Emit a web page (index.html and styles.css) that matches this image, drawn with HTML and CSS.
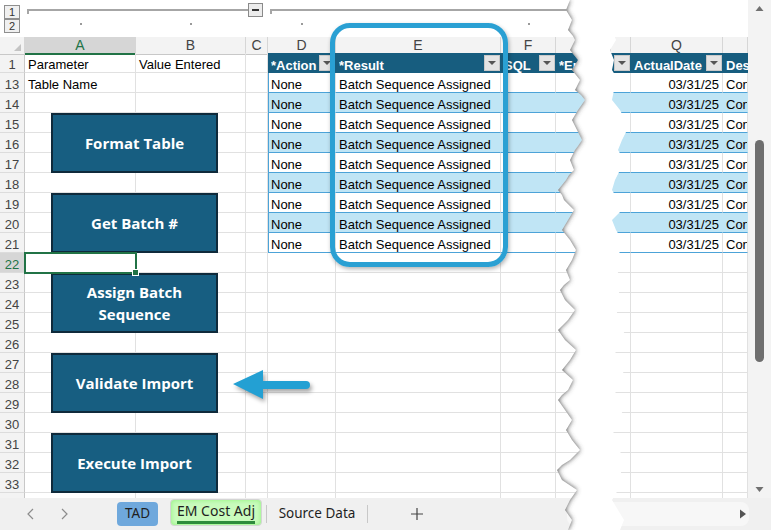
FILE: index.html
```html
<!DOCTYPE html>
<html lang="en">
<head>
    <meta charset="UTF-8">
    <meta name="viewport" content="width=device-width, initial-scale=1.0">
    <title>EM Cost Adj</title>
    <link rel="stylesheet" href="styles.css">
</head>
<body>
    <div class="app">
        <div class="main">
            <div class="sheet">
                <div class="outline">
                    <div class="levels"><span class="lvl">1</span><span class="lvl">2</span></div>
                    <div class="group g1"><span class="bar"></span><span class="minus"></span></div>
                    <div class="group g2"><span class="bar"></span></div>
                    <div class="dot c-a"></div>
                    <div class="dot c-b"></div>
                    <div class="dot c-d"></div>
                    <div class="dot c-f"></div>
                </div>
                <div class="grid" id="grid">
                    <div class="row colhead">
                        <div class="ch corner"></div>
                        <div class="ch on">A</div>
                        <div class="ch">B</div>
                        <div class="ch">C</div>
                        <div class="ch">D</div>
                        <div class="ch">E</div>
                        <div class="ch">F</div>
                        <div class="ch">G</div>
                        <div class="ch"></div>
                        <div class="ch">Q</div>
                        <div class="ch"></div>
                    </div>
                    <div class="row">
                        <div class="c rh">1</div>
                        <div class="c">Parameter</div>
                        <div class="c">Value Entered</div>
                        <div class="c"></div>
                        <div class="hd"><span class="lbl">*Action</span><span class="fb"></span></div>
                        <div class="hd"><span class="lbl">*Result</span><span class="fb"></span></div>
                        <div class="hd"><span class="lbl">SQL</span><span class="fb"></span></div>
                        <div class="hd"><span class="lbl">*Error</span><span class="fb"></span></div>
                        <div class="hd"><span class="lbl"></span><span class="fb"></span></div>
                        <div class="hd"><span class="lbl">ActualDate</span><span class="fb"></span></div>
                        <div class="hd"><span class="lbl">Des</span></div>
                    </div>
                </div>
            </div>
            <div class="vscroll">
                <svg class="arr" width="9" height="18" viewBox="0 0 9 18"><path d="M0.5 11 L4.5 6 L8.5 11 Z" fill="#707070"/></svg>
                <div class="thumb"></div>
                <svg class="arr down" width="9" height="18" viewBox="0 0 9 18"><path d="M0.5 7 L4.5 12 L8.5 7 Z" fill="#707070"/></svg>
            </div>
        </div>

        <div class="tabbar">
            <svg class="nav" width="14" height="14" viewBox="0 0 14 14"><polyline points="9,2 4,7 9,12" fill="none" stroke="#8c8c8c" stroke-width="1.2"/></svg>
            <svg class="nav next" width="14" height="14" viewBox="0 0 14 14"><polyline points="5,2 10,7 5,12" fill="none" stroke="#8c8c8c" stroke-width="1.2"/></svg>
            <div class="tab tad">TAD</div>
            <div class="tab active"><span>EM Cost Adj</span></div>
            <span class="sep"></span>
            <div class="tab plain">Source Data</div>
            <span class="sep last"></span>
            <svg class="add" width="20" height="14" viewBox="0 0 20 14"><path d="M10 1 V13 M4 7 H16" stroke="#444" stroke-width="1.2"/></svg>
            <div class="hscroll">
                <svg width="8" height="12" viewBox="0 0 8 12"><path d="M1 1.5 L7 6 L1 10.5 Z" fill="#555"/></svg>
            </div>
        </div>

        <!-- macro buttons floating over the sheet -->
        <div class="macros">
            <div class="macro">Format Table</div>
            <div class="macro">Get Batch #</div>
            <div class="macro">Assign Batch<br>Sequence</div>
            <div class="macro">Validate Import</div>
            <div class="macro">Execute Import</div>
        </div>

        <div class="focus-ring"></div>

        <svg class="pointer" width="95" height="45" viewBox="0 0 95 45">
            <path d="M8 22 L38 8 L38 19 L81 19 A4 4 0 0 1 81 27 L38 27 L38 37 Z" fill="#23a0d3"/>
        </svg>

        <!-- torn gap between the two halves of the sheet -->
        <svg class="tear" width="100" height="530" viewBox="0 0 100 530">
            <defs>
                <clipPath id="gap">
                    <path d="M30 0 L26 10 L29 15 L32 20 L28 30 L33 36 L35 40 L30 50 L34 55 L38 60 L32 70 L36 75 L40 80 L35 90 L41 95 L45 100 L38 110 L35 115 L32 120 L37 130 L42 140 L38 146 L35 150 L30 160 L34 170 L29 175 L26 180 L18 190 L22 195 L24 200 L34 210 L28 220 L25 225 L22 230 L30 240 L36 250 L32 260 L26 270 L30 280 L24 285 L20 290 L25 300 L35 310 L28 320 L22 326 L18 330 L25 340 L36 350 L30 360 L22 370 L33 380 L28 390 L22 395 L18 400 L25 410 L32 420 L26 430 L32 440 L40 450 L30 460 L22 465 L17 470 L22 480 L37 490 L30 500 L25 510 L32 520 L28 530 L80 530 L84 520 L78 510 L72 500 L78 490 L84 480 L80 470 L76 460 L82 450 L78 440 L72 430 L76 420 L84 410 L80 400 L74 390 L78 380 L85 370 L80 360 L74 350 L78 340 L86 330 L80 320 L76 310 L82 300 L78 290 L72 280 L80 270 L84 260 L78 250 L82 240 L76 230 L72 220 L82 210 L78 200 L72 190 L75 180 L80 170 L84 160 L78 150 L82 140 L87 130 L85 120 L80 110 L72 100 L74 90 L78 80 L72 70 L74 60 L70 50 L76 40 L72 30 L80 20 L74 10 L78 0 Z"/>
                </clipPath>
                <filter id="soft" x="-50%" y="-5%" width="200%" height="110%">
                    <feGaussianBlur stdDeviation="2.5"/>
                </filter>
            </defs>
            <rect x="0" y="0" width="100" height="530" fill="#fff" clip-path="url(#gap)"/>
            <g clip-path="url(#gap)">
                <path filter="url(#soft)" fill="#4a4a4a" d="M-20 0 L30 0 L26 10 L29 15 L32 20 L28 30 L33 36 L35 40 L30 50 L34 55 L38 60 L32 70 L36 75 L40 80 L35 90 L41 95 L45 100 L38 110 L35 115 L32 120 L37 130 L42 140 L38 146 L35 150 L30 160 L34 170 L29 175 L26 180 L18 190 L22 195 L24 200 L34 210 L28 220 L25 225 L22 230 L30 240 L36 250 L32 260 L26 270 L30 280 L24 285 L20 290 L25 300 L35 310 L28 320 L22 326 L18 330 L25 340 L36 350 L30 360 L22 370 L33 380 L28 390 L22 395 L18 400 L25 410 L32 420 L26 430 L32 440 L40 450 L30 460 L22 465 L17 470 L22 480 L37 490 L30 500 L25 510 L32 520 L28 530 L-20 530 Z"/>
            </g>
        </svg>
    </div>

    <script>
        // rows 13-34 of the sheet, the table ends at row 21
        const grid = document.getElementById('grid');
        const banded = [14, 16, 18, 20];

        for (let r = 13; r <= 34; r++) {
            const row = document.createElement('div');
            row.className = 'row';
            let html = '<div class="c rh' + (r === 22 ? ' on' : '') + '">' + r + '</div>';
            html += '<div class="c' + (r === 22 ? ' sel' : '') + '">' + (r === 13 ? 'Table Name' : '') + '</div>';
            html += '<div class="c"></div><div class="c"></div>';

            if (r <= 21) {
                const t = banded.includes(r) ? 'c t band' : 'c t';
                html += '<div class="' + t + ' first">None</div>';
                html += '<div class="' + t + '">Batch Sequence Assigned</div>';
                html += '<div class="' + t + '"></div>';
                html += '<div class="' + t + '"></div>';
                html += '<div class="' + t + '"></div>';
                html += '<div class="' + t + ' num">03/31/25</div>';
                html += '<div class="' + t + '">Con</div>';
            } else {
                for (let i = 0; i < 7; i++) html += '<div class="c"></div>';
            }
            row.innerHTML = html;
            grid.appendChild(row);
        }
    </script>
</body>
</html>
```

FILE: styles.css
```css
body {
    margin: 0;
    font-family: "Liberation Sans", Arial, sans-serif;
    font-size: 13px;
    color: #000;
    background-color: #fff;
}
.app {
    position: relative;
    width: 771px;
    height: 530px;
    overflow: hidden;
}
.main {
    display: flex;
    height: 498px;
}
.sheet {
    width: 748px;
    overflow: hidden;
}

/* outline / grouping strip */
.outline {
    display: grid;
    grid-template-columns: 25px 111px 110px 22px 68px 165px 55px 55px 20px 92px 25px;
    grid-template-rows: 18px 19px;
    height: 37px;
}
.levels {
    grid-column: 1;
    grid-row: 1 / 3;
    display: flex;
    flex-direction: column;
    padding: 5px 0 0 4px;
}
.lvl {
    width: 16px;
    height: 14px;
    box-sizing: border-box;
    border: 1px solid #8f8f8f;
    background-color: #f0f0f0;
    color: #333;
    font-size: 11px;
    line-height: 12px;
    text-align: center;
}
.group {
    grid-row: 1;
    display: flex;
    align-items: flex-start;
    padding-top: 3px;
}
.g1 {
    grid-column: 2 / 5;
    padding-left: 2px;
    padding-right: 5px;
}
.g2 {
    grid-column: 5 / 9;
    padding-left: 2px;
}
.bar {
    flex: 1;
    height: 3px;
    margin-top: 6px;
    border-top: 2px solid #a6a6a6;
    border-left: 2px solid #a6a6a6;
}
.minus {
    position: relative;
    width: 15px;
    height: 14px;
    box-sizing: border-box;
    border: 1px solid #8a8a8a;
    background-color: #ececec;
}
.minus::after {
    content: "";
    position: absolute;
    left: 3px;
    top: 5px;
    width: 7px;
    height: 2px;
    background-color: #333;
}
.dot {
    grid-row: 2;
    justify-self: center;
    width: 2px;
    height: 2px;
    margin-top: 5px;
    background-color: #9a9a9a;
}
.c-a { grid-column: 2; }
.c-b { grid-column: 3; }
.c-d { grid-column: 5; }
.c-f { grid-column: 7; }

/* sheet grid */
.row {
    display: grid;
    grid-template-columns: 25px 111px 110px 22px 68px 165px 55px 55px 20px 92px 25px;
    height: 20px;
}
.colhead {
    height: 16px;
}
.ch {
    box-sizing: border-box;
    background-color: #f3f3f3;
    border-right: 1px solid #d6d6d6;
    border-bottom: 1px solid #c8c8c8;
    color: #444;
    font-size: 14px;
    line-height: 16px;
    text-align: center;
}
.ch.on {
    background-color: #d6d6d6;
    color: #217346;
    border-bottom: 2px solid #217346;
}
.ch.corner {
    position: relative;
}
.ch.corner::after {
    content: "";
    position: absolute;
    right: 3px;
    bottom: 3px;
    border-left: 7px solid transparent;
    border-bottom: 7px solid #c4c4c4;
}
.c {
    box-sizing: border-box;
    border-right: 1px solid #e1e1e1;
    border-bottom: 1px solid #e1e1e1;
    padding: 0 3px;
    line-height: 23px;
    white-space: nowrap;
    overflow: hidden;
}
.rh {
    padding: 0;
    background-color: #f3f3f3;
    border-right-color: #c8c8c8;
    border-bottom-color: #dcdcdc;
    color: #444;
    text-align: center;
}
.rh.on {
    background-color: #d6d6d6;
    color: #217346;
}
.sel {
    position: relative;
    z-index: 1;
    overflow: visible;
    outline: 2px solid #217346;
    outline-offset: -1px;
}
.sel::after {
    content: "";
    position: absolute;
    right: -4px;
    bottom: -4px;
    width: 5px;
    height: 5px;
    background-color: #217346;
    border: 1px solid #fff;
}

/* excel table */
.hd {
    display: flex;
    align-items: center;
    padding-left: 3px;
    background-color: #175d7f;
    color: #fff;
    font-weight: bold;
    white-space: nowrap;
    overflow: hidden;
}
.hd .lbl {
    flex: 1;
    padding-top: 4px;
    overflow: hidden;
}
.fb {
    position: relative;
    flex: none;
    width: 16px;
    height: 16px;
    margin-right: 1px;
    box-sizing: border-box;
    border: 1px solid #c9c9c9;
    background-color: #e4e4e4;
}
.fb::after {
    content: "";
    position: absolute;
    left: 3px;
    top: 5px;
    border-left: 4px solid transparent;
    border-right: 4px solid transparent;
    border-top: 4px solid #555;
}
.t {
    border-bottom-color: #4ca3d8;
}
.t.first {
    box-shadow: inset 1px 0 0 #4ca3d8;
}
.band {
    background-color: #c0e5f5;
    border-right-color: #c0e5f5;
}
.num {
    text-align: right;
}

/* scrollbar */
.vscroll {
    width: 23px;
    display: flex;
    flex-direction: column;
    align-items: center;
    background-color: #f3f3f3;
}
.vscroll .arr {
    flex: none;
}
.vscroll .down {
    margin-top: auto;
}
.thumb {
    width: 9px;
    height: 222px;
    margin-top: 122px;
    border-radius: 5px;
    background-color: #6e6e6e;
}

/* sheet tabs */
.tabbar {
    display: flex;
    align-items: center;
    height: 32px;
    background-color: #f0f0f0;
    font-family: "Noto Sans", sans-serif;
    font-size: 13.5px;
    color: #1f1f1f;
}
.nav {
    margin-left: 24px;
}
.nav.next {
    margin-left: 19px;
}
.tab {
    box-sizing: border-box;
    height: 24px;
    line-height: 23px;
    text-align: center;
    white-space: nowrap;
}
.tad {
    width: 41px;
    margin-left: 46px;
    border-radius: 4px;
    background-color: #6fa8dc;
}
.tab.active {
    align-self: flex-start;
    width: 92px;
    height: 27px;
    margin-top: 1px;
    margin-left: 12px;
    padding-top: 1px;
    border: 1px solid #d4d4d4;
    border-radius: 4px;
    background-color: #c9fbbd;
    box-shadow: inset 0 0 5px #8ff27a;
    font-size: 14px;
    line-height: 20px;
}
.tab.active span {
    display: inline-block;
    border-bottom: 3px solid #2e8b3c;
}
.sep {
    width: 1px;
    height: 18px;
    margin-left: 4px;
    background-color: #c8c8c8;
}
.sep.last {
    margin-left: 0;
}
.tab.plain {
    width: 100px;
}
.add {
    margin-left: 39px;
}
.hscroll {
    flex: 1;
    display: flex;
    align-items: center;
    justify-content: flex-end;
    height: 24px;
    margin-left: 140px;
    margin-right: 22px;
    padding-right: 2px;
    border-radius: 8px;
    background-color: #f7f7f7;
}

/* overlays */
.macros {
    position: absolute;
    left: 51px;
    top: 113px;
    display: flex;
    flex-direction: column;
    gap: 20px;
}
.macro {
    width: 167px;
    height: 60px;
    box-sizing: border-box;
    display: flex;
    align-items: center;
    justify-content: center;
    border: 2px solid #0f2a3b;
    background-color: #175e81;
    color: #fff;
    font-family: "Open Sans", sans-serif;
    font-weight: 700;
    font-size: 15px;
    line-height: 22px;
    text-align: center;
}
.focus-ring {
    position: absolute;
    left: 330px;
    top: 23px;
    width: 178px;
    height: 244px;
    box-sizing: border-box;
    border: 5px solid #2aa0d3;
    border-radius: 20px;
    box-shadow: 1px 2px 4px rgba(0, 0, 0, 0.3);
}
.pointer {
    position: absolute;
    left: 225px;
    top: 362px;
    filter: drop-shadow(2px 3px 2px rgba(0, 0, 0, 0.35));
}
.tear {
    position: absolute;
    left: 540px;
    top: 0;
}
```
